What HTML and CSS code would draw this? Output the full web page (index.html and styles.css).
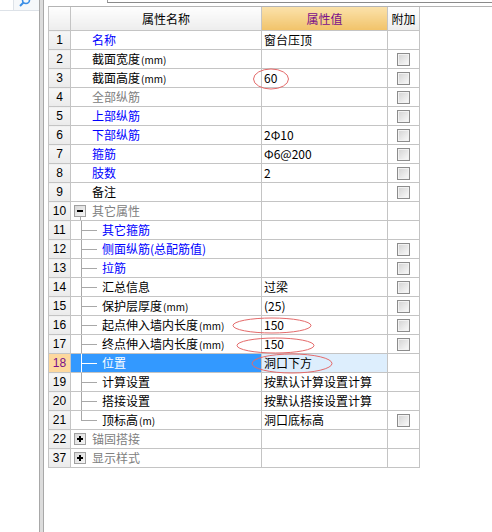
FILE: index.html
```html
<!DOCTYPE html>
<html>
<head>
<meta charset="utf-8">
<link rel="stylesheet" href="styles.css">
</head>
<body>
<div class="app">
  <div class="side">
    <div class="side-top">
      <div class="side-box"></div>
      <svg class="search" width="12" height="8" viewBox="0 0 12 8"><circle cx="7" cy="0" r="3.5" fill="none" stroke="#3a8ee6" stroke-width="1.6"/><line x1="4.5" y1="2.5" x2="1" y2="6" stroke="#3a8ee6" stroke-width="2"/></svg>
    </div>
  </div>
  <div class="splitter"></div>
  <div class="main">
    <div class="main-top"><div class="toolbar"></div></div>
    <table class="grid">
      <colgroup><col class="c-num"><col class="c-name"><col class="c-val"><col class="c-ext"></colgroup>
      <thead>
        <tr><th class="h-num"></th><th class="h-name">属性名称</th><th class="h-val">属性值</th><th class="h-ext">附加</th></tr>
      </thead>
      <tbody>
        <tr><td class="num">1</td><td class="name"><span class="lbl blue">名称</span></td><td class="val">窗台压顶</td><td class="ext"></td></tr>
        <tr><td class="num">2</td><td class="name"><span class="lbl">截面宽度<span class="unit">(mm)</span></span></td><td class="val"></td><td class="ext"><span class="cb"></span></td></tr>
        <tr><td class="num">3</td><td class="name"><span class="lbl">截面高度<span class="unit">(mm)</span></span></td><td class="val">60</td><td class="ext"><span class="cb"></span></td></tr>
        <tr><td class="num">4</td><td class="name"><span class="lbl gray">全部纵筋</span></td><td class="val"></td><td class="ext"><span class="cb"></span></td></tr>
        <tr><td class="num">5</td><td class="name"><span class="lbl blue">上部纵筋</span></td><td class="val"></td><td class="ext"><span class="cb"></span></td></tr>
        <tr><td class="num">6</td><td class="name"><span class="lbl blue">下部纵筋</span></td><td class="val">2Φ10</td><td class="ext"><span class="cb"></span></td></tr>
        <tr><td class="num">7</td><td class="name"><span class="lbl blue">箍筋</span></td><td class="val">Φ6@200</td><td class="ext"><span class="cb"></span></td></tr>
        <tr><td class="num">8</td><td class="name"><span class="lbl blue">肢数</span></td><td class="val">2</td><td class="ext"><span class="cb"></span></td></tr>
        <tr><td class="num">9</td><td class="name"><span class="lbl">备注</span></td><td class="val"></td><td class="ext"><span class="cb"></span></td></tr>
        <tr><td class="num">10</td><td class="name"><span class="node"><span class="tg minus"></span><span class="stem"></span></span><span class="gray">其它属性</span></td><td class="val"></td><td class="ext"></td></tr>
        <tr><td class="num">11</td><td class="name"><span class="branch"></span><span class="blue">其它箍筋</span></td><td class="val"></td><td class="ext"></td></tr>
        <tr><td class="num">12</td><td class="name"><span class="branch"></span><span class="blue">侧面纵筋(总配筋值)</span></td><td class="val"></td><td class="ext"><span class="cb"></span></td></tr>
        <tr><td class="num">13</td><td class="name"><span class="branch"></span><span class="blue">拉筋</span></td><td class="val"></td><td class="ext"><span class="cb"></span></td></tr>
        <tr><td class="num">14</td><td class="name"><span class="branch"></span><span>汇总信息</span></td><td class="val">过梁</td><td class="ext"><span class="cb"></span></td></tr>
        <tr><td class="num">15</td><td class="name"><span class="branch"></span><span>保护层厚度<span class="unit">(mm)</span></span></td><td class="val">(25)</td><td class="ext"><span class="cb"></span></td></tr>
        <tr><td class="num">16</td><td class="name"><span class="branch"></span><span>起点伸入墙内长度<span class="unit">(mm)</span></span></td><td class="val">150</td><td class="ext"><span class="cb"></span></td></tr>
        <tr><td class="num">17</td><td class="name"><span class="branch"></span><span>终点伸入墙内长度<span class="unit">(mm)</span></span></td><td class="val">150</td><td class="ext"><span class="cb"></span></td></tr>
        <tr class="sel"><td class="num">18</td><td class="name"><span class="branch"></span><span>位置</span></td><td class="val">洞口下方</td><td class="ext"></td></tr>
        <tr><td class="num">19</td><td class="name"><span class="branch"></span><span>计算设置</span></td><td class="val">按默认计算设置计算</td><td class="ext"></td></tr>
        <tr><td class="num">20</td><td class="name"><span class="branch"></span><span>搭接设置</span></td><td class="val">按默认搭接设置计算</td><td class="ext"></td></tr>
        <tr><td class="num">21</td><td class="name"><span class="branch last"></span><span>顶标高<span class="unit">(m)</span></span></td><td class="val">洞口底标高</td><td class="ext"><span class="cb"></span></td></tr>
        <tr><td class="num">22</td><td class="name"><span class="node"><span class="tg plus"></span></span><span class="gray">锚固搭接</span></td><td class="val"></td><td class="ext"></td></tr>
        <tr><td class="num">37</td><td class="name"><span class="node"><span class="tg plus"></span></span><span class="gray">显示样式</span></td><td class="val"></td><td class="ext"></td></tr>
      </tbody>
    </table>
  </div>
</div>
<svg class="marks" width="492" height="532" viewBox="0 0 492 532">
  <ellipse cx="271" cy="79" rx="17.5" ry="10" />
  <ellipse cx="272" cy="325.5" rx="39" ry="7.5" />
  <ellipse cx="275.5" cy="345.5" rx="38.5" ry="7.5" />
  <ellipse cx="292" cy="363.5" rx="40" ry="9.5" />
</svg>
</body>
</html>
```

FILE: styles.css
```css
html, body {
  margin: 0;
  padding: 0;
  background: #ffffff;
}
body {
  font-family: "Noto Sans CJK SC", "Liberation Sans", sans-serif;
  font-size: 12px;
  color: #000;
}
.app {
  display: flex;
  width: 492px;
  height: 532px;
  overflow: hidden;
}
.side {
  width: 39px;
  flex: none;
  background: #fff;
}
.side-top {
  display: flex;
  height: 10px;
  border-bottom: 1px solid #dde2e8;
  background: #f6f8fa;
}
.side-box {
  width: 13px;
  border-right: 1px solid #dde2e8;
  background: #fff;
}
.search {
  margin-left: 5px;
}
.splitter {
  width: 3px;
  flex: none;
  border-left: 1px solid #a8a8a8;
  border-right: 1px solid #a8a8a8;
  background: #dcdcdc;
}
.main {
  flex: 1;
  padding-left: 4px;
}
.main-top {
  height: 6px;
  border-bottom: 1px solid #b4b4b4;
}
.toolbar {
  margin-left: 59px;
  height: 2px;
  border-left: 1px solid #9a9a9a;
  border-bottom: 1px solid #8a8a8a;
}
.grid {
  border-collapse: collapse;
  table-layout: fixed;
  width: 371px;
}
.c-num { width: 22px; }
.c-name { width: 191px; }
.c-val { width: 126px; }
.c-ext { width: 32px; }
.grid th, .grid td {
  border: 1px solid #c4c4c4;
  padding: 0;
  white-space: nowrap;
  overflow: hidden;
}
.grid thead tr th {
  border-top: none;
  height: 23px;
  font-weight: normal;
  background: linear-gradient(#fefefe, #ededed);
  font-size: 12px;
}
.grid th.h-val {
  background: linear-gradient(#fbe2ab, #f1c36a);
  color: #7a0f8a;
}
.grid td {
  height: 18px;
  line-height: 18px;
}
.num {
  text-align: center;
  font-family: "Liberation Sans", sans-serif;
  background: linear-gradient(#f6f6f6, #ebebeb);
}
.name {
  font-size: 12px;
}
.unit {
  font-size: 10px;
  line-height: 10px;
  margin-left: 1px;
}
.name .lbl {
  padding-left: 21px;
}
.val {
  padding-left: 2px !important;
  font-size: 12px;
}
.ext {
  text-align: center;
}
.blue { color: #0000ff; }
.gray { color: #808080; }
.cb {
  display: inline-block;
  vertical-align: middle;
  width: 11px;
  height: 11px;
  border: 1px solid #8c8c8c;
  box-shadow: inset 0 0 0 1px #f2f2f2;
  background: linear-gradient(135deg, #d2d2d2, #fbfbfb);
  margin-top: -2px;
}
.node {
  display: inline-block;
  vertical-align: top;
  width: 21px;
  height: 18px;
  position: relative;
}
.tg {
  position: absolute;
  left: 3px;
  top: 3px;
  width: 10px;
  height: 10px;
  border: 1px solid #a0a0a0;
  background: linear-gradient(135deg, #d8d8d8, #f6f6f6);
}
.tg::before {
  content: "";
  position: absolute;
  left: 2px;
  top: 4px;
  width: 6px;
  height: 2px;
  background: #000;
}
.tg.plus::after {
  content: "";
  position: absolute;
  left: 4px;
  top: 2px;
  width: 2px;
  height: 6px;
  background: #000;
}
.stem {
  position: absolute;
  left: 9px;
  top: 15px;
  width: 1px;
  height: 4px;
  background: #a8a8a8;
}
.branch {
  display: inline-block;
  vertical-align: top;
  width: 16px;
  height: 18px;
  margin-left: 10px;
  margin-right: 5px;
  background:
    linear-gradient(#a8a8a8, #a8a8a8) 0 0 / 1px 19px no-repeat,
    linear-gradient(#a8a8a8, #a8a8a8) 0 9px / 16px 1px no-repeat;
  margin-bottom: -1px;
}
.branch.last {
  background:
    linear-gradient(#a8a8a8, #a8a8a8) 0 0 / 1px 10px no-repeat,
    linear-gradient(#a8a8a8, #a8a8a8) 0 9px / 16px 1px no-repeat;
}
tr.sel .num {
  background: #fdd89e;
  color: #7a0f8a;
}
tr.sel .name {
  background: #3399ff;
  color: #fff;
}
tr.sel .branch {
  background:
    linear-gradient(#ffffff, #ffffff) 0 0 / 1px 19px no-repeat,
    linear-gradient(#ffffff, #ffffff) 0 9px / 16px 1px no-repeat;
}
tr.sel .val {
  background: #ddeefd;
}
.marks {
  position: absolute;
  left: 0;
  top: 0;
  pointer-events: none;
}
.marks ellipse {
  fill: none;
  stroke: #e46a6a;
  stroke-width: 1;
}
```
